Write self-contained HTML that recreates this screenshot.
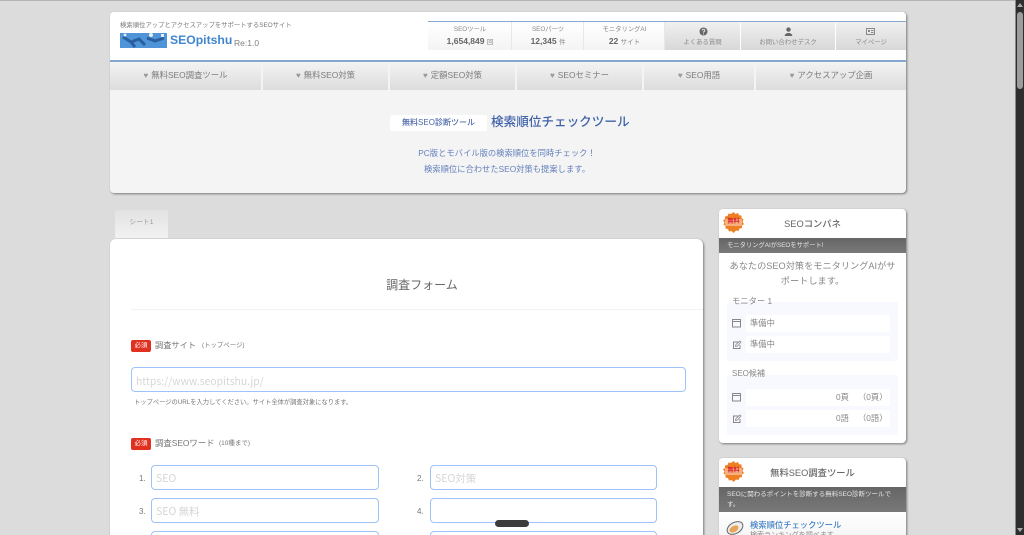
<!DOCTYPE html>
<html lang="ja"><head><meta charset="utf-8"><title>検索順位チェックツール</title>
<style>
*{box-sizing:border-box}
html,body{margin:0;padding:0;width:1024px;height:535px;overflow:hidden;background:#dcdcdc}
body{font-family:"Liberation Sans","Noto Sans CJK JP",sans-serif;color:#777;position:relative}
#w{position:absolute;left:0;top:0;width:1024px;height:535px;overflow:hidden;filter:blur(.3px)}
.a{position:absolute}
.t{position:absolute;white-space:nowrap;line-height:1}
.c{position:absolute;white-space:nowrap;text-align:center;line-height:1}
.card{position:absolute;background:#fff;border-radius:4px;box-shadow:1px 1px 2px rgba(0,0,0,.45)}
.stat{position:absolute;top:22px;height:28px;background:linear-gradient(#fff,#f4f4f4);border-right:1px solid #e8e8e8}
.btn{position:absolute;top:22px;height:28px;background:linear-gradient(#f0f0f0,#d8d8d8)}
.nav{position:absolute;top:62px;height:28px;background:linear-gradient(#f3f3f3,#dcdcdc);font-size:8.4px;color:#7c7c7c;text-align:center;line-height:27px;white-space:nowrap}
.nav span{font-size:8px;color:#999;margin-right:3px}
.inp{position:absolute;background:#fff;border:1px solid #9fc2fa;border-radius:4px;height:25px;font-family:"Noto Sans CJK JP",sans-serif;font-size:10.5px;color:#d6d6d6;line-height:25px;padding-left:4px;white-space:nowrap}
.req{position:absolute;left:131px;width:20px;height:12px;background:#e03020;border-radius:2px;color:#fff;font-size:6.5px;line-height:12px;text-align:center}
.rowb{position:absolute;background:#fff;left:746px;width:144px;height:17px;font-size:8.3px;line-height:17px;color:#888}
.bar{position:absolute;left:719px;width:187px;background:linear-gradient(#666,#797979);color:#e4e4e4;font-size:6.3px}
.badge{position:absolute;left:723px;width:21px;height:21px}
</style></head><body><div id="w">
<div class="a" style="left:0;top:0;width:1016px;height:1px;background:#b5b5b5"></div>

<!-- header card -->
<div class="card" style="left:110px;top:12px;width:796px;height:181px;background:#f4f4f4"></div>
<div class="a" style="left:110px;top:12px;width:796px;height:48px;background:#fff;border-radius:4px 4px 0 0"></div>
<div class="a" style="left:110px;top:60px;width:796px;height:2px;background:#86a8cf"></div>
<div class="t" style="left:120px;top:23px;font-size:6.35px;color:#777">検索順位アップとアクセスアップをサポートするSEOサイト</div>
<svg class="a" style="left:120px;top:33px" width="47" height="15" viewBox="0 0 47 15"><rect width="47" height="15" fill="#4f93d8"/><path d="M3 4l8 5 8-3 6 6M27 5l8 3 9-3M11 9l4 5" stroke="#2a5f9e" stroke-width="3" fill="none"/><circle cx="5" cy="2" r="1.500" fill="#dfeaf5"/><circle cx="31" cy="2" r="2" fill="#e8f0f8"/><rect x="41" y="1" width="3" height="3" fill="#e4eef8"/></svg>
<div class="t" style="left:170px;top:34px;font-size:12.2px;font-weight:bold;color:#3f86cf">SEOpitshu</div>
<div class="t" style="left:234px;top:39px;font-size:8.5px;color:#808080">Re:1.0</div>

<div class="a" style="left:428px;top:21px;width:478px;height:1px;background:#86a8cf"></div>
<div class="stat" style="left:428px;width:84px"></div>
<div class="stat" style="left:512px;width:72px"></div>
<div class="stat" style="left:584px;width:81px"></div>
<div class="c" style="left:428px;width:84px;top:27px;font-size:6.3px;color:#888">SEOツール</div>
<div class="c" style="left:428px;width:84px;top:37px;font-size:8.5px;font-weight:bold;color:#666">1,654,849 <span style="font-weight:normal;font-size:6.5px;color:#888">回</span></div>
<div class="c" style="left:512px;width:72px;top:27px;font-size:6.3px;color:#888">SEOパーツ</div>
<div class="c" style="left:512px;width:72px;top:37px;font-size:8.5px;font-weight:bold;color:#666">12,345 <span style="font-weight:normal;font-size:6.5px;color:#888">件</span></div>
<div class="c" style="left:584px;width:81px;top:27px;font-size:6.3px;color:#888">モニタリングAI</div>
<div class="c" style="left:584px;width:81px;top:37px;font-size:8.5px;font-weight:bold;color:#666">22 <span style="font-weight:normal;font-size:6.5px;color:#888">サイト</span></div>

<div class="btn" style="left:665px;width:75px"></div>
<div class="btn" style="left:741px;width:94px"></div>
<div class="btn" style="left:836px;width:70px"></div>
<svg class="a" style="left:699px;top:27px" width="9" height="9" viewBox="0 0 9 9"><circle cx="4.5" cy="4.5" r="4" fill="#666"/><path d="M3.2 3.4a1.3 1.3 0 1 1 1.3 1.5v.7" stroke="#ddd" fill="none"/><rect x="4" y="6.4" width="1" height="1" fill="#ddd"/></svg>
<svg class="a" style="left:784px;top:27px" width="9" height="9" viewBox="0 0 9 9"><circle cx="4.5" cy="2.6" r="2.2" fill="#666"/><path d="M.8 9V7.6L3.2 6h2.6l2.4 1.6V9z" fill="#666"/></svg>
<svg class="a" style="left:866px;top:28px" width="9" height="7" viewBox="0 0 9 7"><rect x=".5" y=".5" width="8" height="6" fill="none" stroke="#888"/><rect x="2" y="2" width="2" height="2" fill="#888"/><path d="M5 2.500h2.500M5 4.500h2.500" stroke="#888"/></svg>
<div class="c" style="left:665px;width:75px;top:39.500px;font-size:6.4px;color:#8a8a8a">よくある質問</div>
<div class="c" style="left:741px;width:94px;top:39.500px;font-size:6.4px;color:#8a8a8a">お問い合わせデスク</div>
<div class="c" style="left:836px;width:70px;top:39.500px;font-size:6.4px;color:#8a8a8a">マイページ</div>

<div class="nav" style="left:110px;width:151px"><span>♥</span>無料SEO調査ツール</div>
<div class="nav" style="left:263px;width:125px"><span>♥</span>無料SEO対策</div>
<div class="nav" style="left:390px;width:125px"><span>♥</span>定額SEO対策</div>
<div class="nav" style="left:517px;width:125px"><span>♥</span>SEOセミナー</div>
<div class="nav" style="left:644px;width:110px"><span>♥</span>SEO用語</div>
<div class="nav" style="left:756px;width:150px"><span>♥</span>アクセスアップ企画</div>

<!-- hero -->
<div class="a" style="left:390px;top:115px;width:97px;height:16px;background:#fff;border-radius:2px"></div>
<div class="c" style="left:390px;width:97px;top:119px;font-size:8px;font-weight:500;color:#4a67a8">無料SEO診断ツール</div>
<div class="t" style="left:491px;top:115.500px;font-size:12.6px;font-weight:500;color:#3f62a8">検索順位チェックツール</div>
<div class="c" style="left:340px;width:334px;top:149px;font-size:8.3px;color:#6480bc">PC版とモバイル版の検索順位を同時チェック！</div>
<div class="c" style="left:340px;width:334px;top:165px;font-size:8.3px;color:#6480bc">検索順位に合わせたSEO対策も提案します。</div>

<!-- tab -->
<div class="a" style="left:115px;top:210px;width:53px;height:28px;background:linear-gradient(#e2e2e2,#f2f2f2);border-radius:2px 2px 0 0"></div>
<div class="c" style="left:115px;width:53px;top:220px;font-size:6.800px;color:#999">シート1</div>

<!-- main card -->
<div class="card" style="left:110px;top:239px;width:593px;height:320px;border-radius:6px"></div>
<div class="c" style="left:110px;width:624px;top:279px;font-size:12px;color:#666">調査フォーム</div>
<div class="a" style="left:131px;top:309px;width:572px;height:1px;background:#f2f2f2"></div>

<div class="req" style="top:340px">必須</div>
<div class="t" style="left:155px;top:341.500px;font-size:8.2px;color:#777">調査サイト</div>
<div class="t" style="left:202px;top:343px;font-size:6.4px;color:#777">(トップページ)</div>
<div class="inp" style="left:131px;top:367px;width:555px;font-size:10.4px">https://www.seopitshu.jp/</div>
<div class="t" style="left:134px;top:400px;font-size:6.280px;color:#777">トップページのURLを入力してください。サイト全体が調査対象になります。</div>

<div class="req" style="top:438px">必須</div>
<div class="t" style="left:155px;top:439px;font-size:8.4px;color:#777">調査SEOワード</div>
<div class="t" style="left:219px;top:441px;font-size:6.500px;color:#777">(10種まで)</div>

<div class="t" style="left:139px;top:475px;font-size:8px;color:#777">1.</div>
<div class="inp" style="left:151px;top:465px;width:228px">SEO</div>
<div class="t" style="left:417px;top:475px;font-size:8px;color:#777">2.</div>
<div class="inp" style="left:430px;top:465px;width:227px">SEO対策</div>
<div class="t" style="left:139px;top:508px;font-size:8px;color:#777">3.</div>
<div class="inp" style="left:151px;top:498px;width:228px">SEO 無料</div>
<div class="t" style="left:417px;top:508px;font-size:8px;color:#777">4.</div>
<div class="inp" style="left:430px;top:498px;width:227px"></div>
<div class="inp" style="left:151px;top:531px;width:228px"></div>
<div class="inp" style="left:430px;top:531px;width:227px"></div>
<div class="a" style="left:495px;top:520px;width:34px;height:7px;background:#3c3c3c;border-radius:4px"></div>

<!-- side card 1 -->
<div class="card" style="left:719px;top:209px;width:187px;height:234px"></div>
<svg class="badge" style="top:212px" viewBox="0 0 21 21"><polygon points="10.5,0 12.5,2 15,1 16,3.300 18.500,3.500 18.500,6 20.500,7.500 19.500,10 21,12 19,13.500 19,16 16.500,16.500 15.500,19 13,18.500 10.500,21 8.500,19 6,19.500 5,17 2.500,16.500 2.500,14 .5,12.500 1.500,10.500 0,8.500 2,7 2,4.500 4.500,4 5.500,1.500 8,2" fill="#ee7f22"/><rect x="2" y="7" width="17" height="7" rx="1" fill="#f7b080"/></svg>
<div class="c" style="left:723px;width:21px;top:219px;font-size:6px;font-weight:bold;color:#d8202c">無料</div>
<div class="c" style="left:719px;width:187px;top:220px;font-size:9.3px;font-weight:500;color:#666">SEOコンパネ</div>
<div class="bar" style="top:238px;height:15px;line-height:15px;padding-left:8px">モニタリングAIがSEOをサポート!</div>
<div class="c" style="left:719px;width:187px;top:259px;font-size:9.2px;color:#888;line-height:14.500px">あなたのSEO対策をモニタリングAIがサ<br>ポートします。</div>

<div class="a" style="left:727px;top:302px;width:171px;height:59px;background:#f8f8ff;border-radius:2px"></div>
<div class="t" style="left:732px;top:297px;font-size:8.300px;color:#888">モニター 1</div>
<svg class="a" style="left:732px;top:319px" width="10" height="9" viewBox="0 0 10 9"><rect x=".5" y=".5" width="8" height="7.500" fill="none" stroke="#888"/><path d="M.5 2.500h8" stroke="#888"/></svg>
<div class="rowb" style="top:315px;padding-left:4px;">準備中</div>
<svg class="a" style="left:732px;top:340px" width="10" height="10" viewBox="0 0 10 10"><path d="M7 2H1.500v6.500H8V5" fill="none" stroke="#888"/><path d="M3.500 6.500l.5-2L8 1l1 1-3.500 4z" fill="none" stroke="#888" stroke-width=".8"/></svg>
<div class="rowb" style="top:336px;padding-left:4px;">準備中</div>

<div class="a" style="left:727px;top:375px;width:171px;height:60px;background:#f8f8ff;border-radius:2px"></div>
<div class="t" style="left:732px;top:370px;font-size:8px;color:#888">SEO候補</div>
<svg class="a" style="left:732px;top:393px" width="10" height="9" viewBox="0 0 10 9"><rect x=".5" y=".5" width="8" height="7.500" fill="none" stroke="#888"/><path d="M.5 2.500h8" stroke="#888"/></svg>
<div class="rowb" style="top:389px"></div>
<div class="t" style="left:836px;top:393px;font-size:8.300px;color:#888">0頁</div>
<div class="t" style="left:858px;top:393px;font-size:8.300px;color:#888">（0頁）</div>
<svg class="a" style="left:732px;top:414px" width="10" height="10" viewBox="0 0 10 10"><path d="M7 2H1.500v6.500H8V5" fill="none" stroke="#888"/><path d="M3.500 6.500l.5-2L8 1l1 1-3.500 4z" fill="none" stroke="#888" stroke-width=".8"/></svg>
<div class="rowb" style="top:410px"></div>
<div class="t" style="left:836px;top:414px;font-size:8.300px;color:#888">0語</div>
<div class="t" style="left:858px;top:414px;font-size:8.300px;color:#888">（0語）</div>

<!-- side card 2 -->
<div class="card" style="left:719px;top:458px;width:187px;height:100px"></div>
<svg class="badge" style="top:461px" viewBox="0 0 21 21"><polygon points="10.5,0 12.5,2 15,1 16,3.300 18.500,3.500 18.500,6 20.500,7.500 19.500,10 21,12 19,13.500 19,16 16.500,16.500 15.500,19 13,18.500 10.500,21 8.500,19 6,19.500 5,17 2.500,16.500 2.500,14 .5,12.500 1.500,10.500 0,8.500 2,7 2,4.500 4.500,4 5.500,1.500 8,2" fill="#ee7f22"/><rect x="2" y="7" width="17" height="7" rx="1" fill="#f7b080"/></svg>
<div class="c" style="left:723px;width:21px;top:468px;font-size:6px;font-weight:bold;color:#d8202c">無料</div>
<div class="c" style="left:719px;width:187px;top:469px;font-size:9.300px;font-weight:500;color:#666">無料SEO調査ツール</div>
<div class="bar" style="top:487px;height:25px;line-height:10px;padding:3px 0 0 8px;white-space:nowrap;font-size:6.500px">SEOに関わるポイントを診断する無料SEO診断ツールで<br>す。</div>
<div class="a" style="left:719px;top:512px;width:187px;height:23px;background:linear-gradient(#fff,#f6f6f6)"></div>
<svg class="a" style="left:726px;top:520px" width="18" height="15" viewBox="0 0 18 15"><ellipse cx="9" cy="8" rx="8.500" ry="5.500" transform="rotate(-30 9 8)" fill="#eee" stroke="#666"/><ellipse cx="8" cy="9" rx="5" ry="3" transform="rotate(-30 8 9)" fill="#e8a55a"/></svg>
<div class="t" style="left:750px;top:521px;font-size:8.300px;font-weight:500;color:#3f7fc4">検索順位チェックツール</div>
<div class="t" style="left:750px;top:532px;font-size:7px;color:#888">検索ランキングを調べます</div>

<!-- scrollbar -->
<div class="a" style="left:1015px;top:0;width:1px;height:535px;background:#8a8a8a"></div>
<div class="a" style="left:1016px;top:0;width:8px;height:535px;background:#2e2e2e"></div>
<div class="a" style="left:1017px;top:12px;width:6px;height:77px;background:#9c9c9c;border-radius:3px"></div>
<div class="a" style="left:1017px;top:3px;width:0;height:0;border-left:3px solid transparent;border-right:3px solid transparent;border-bottom:4px solid #aaa"></div>
<div class="a" style="left:1017px;top:528px;width:0;height:0;border-left:3px solid transparent;border-right:3px solid transparent;border-top:4px solid #aaa"></div>
</div></body></html>
